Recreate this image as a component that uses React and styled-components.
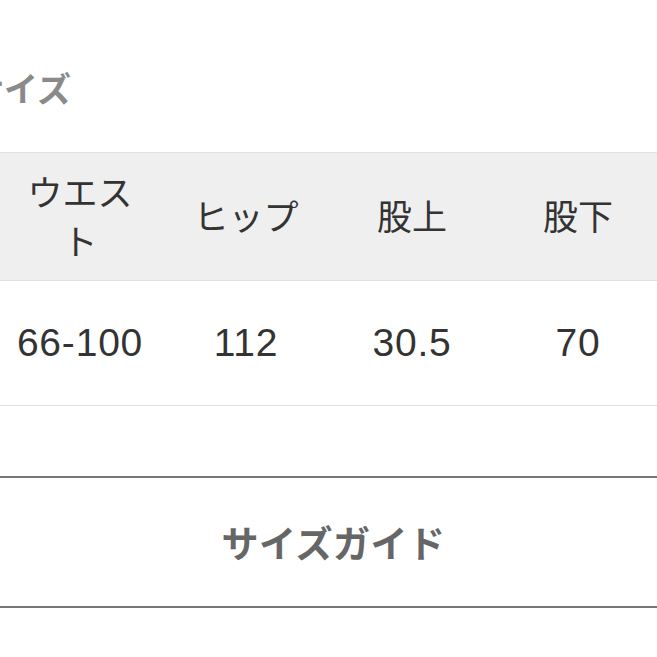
import styled, { createGlobalStyle } from 'styled-components';

const GlobalStyle = createGlobalStyle`
  html,
  body {
    margin: 0;
    padding: 0;
    background: #fff;
  }
  body {
    font-family: 'Liberation Sans', 'Noto Sans CJK JP', sans-serif;
    overflow: hidden;
  }
  * {
    box-sizing: border-box;
  }
`;

const Page = styled.div`
  width: 657px;
  height: 657px;
  overflow: hidden;
  background: #fff;
`;

const Title = styled.h2`
  margin: 0 0 41px -30px;
  padding-top: 65px;
  font-size: 34px;
  line-height: 46px;
  font-weight: bold;
  color: #8a8a8a;
  font-family: 'Noto Sans CJK JP', sans-serif;
`;

const TableWrap = styled.div`
  margin-left: -3px;
  width: 664px;
`;

const SizeTable = styled.table`
  border-collapse: collapse;
  table-layout: fixed;
  width: 664px;
  color: #333;
`;

const HeadRow = styled.tr`
  background: #efefef;
  border-top: 1px solid #e0e0e0;
  border-bottom: 1px solid #e0e0e0;
  height: 128px;
`;

const BodyRow = styled.tr`
  border-bottom: 1px solid #e0e0e0;
  height: 125px;
`;

const Th = styled.th`
  width: 166px;
  padding: 12px 24px 16px;
  font-size: 35px;
  line-height: 49px;
  font-weight: normal;
  text-align: center;
  font-family: 'Noto Sans CJK JP', sans-serif;
`;

const Td = styled.td`
  width: 166px;
  padding: 0 6px;
  font-size: 39px;
  letter-spacing: 0.8px;
  text-align: center;
  font-family: 'Liberation Sans', sans-serif;
`;

const GuideButton = styled.button`
  display: block;
  margin: 70px 0 0 -10px;
  width: 677px;
  height: 132px;
  background: #fff;
  border: 2px solid #777;
  color: #666;
  font-size: 37px;
  font-weight: bold;
  letter-spacing: 0.5px;
  font-family: 'Noto Sans CJK JP', sans-serif;
  padding: 0 0 0 10px;
  cursor: pointer;
`;

const headers = ['ウエスト', 'ヒップ', '股上', '股下'];
const values = ['66-100', '112', '30.5', '70'];

export default function App() {
  return (
    <Page>
      <GlobalStyle />
      <Title>サイズ</Title>
      <TableWrap>
        <SizeTable>
          <thead>
            <HeadRow>
              {headers.map((h) => (
                <Th key={h}>{h}</Th>
              ))}
            </HeadRow>
          </thead>
          <tbody>
            <BodyRow>
              {values.map((v) => (
                <Td key={v}>{v}</Td>
              ))}
            </BodyRow>
          </tbody>
        </SizeTable>
      </TableWrap>
      <GuideButton>サイズガイド</GuideButton>
    </Page>
  );
}
